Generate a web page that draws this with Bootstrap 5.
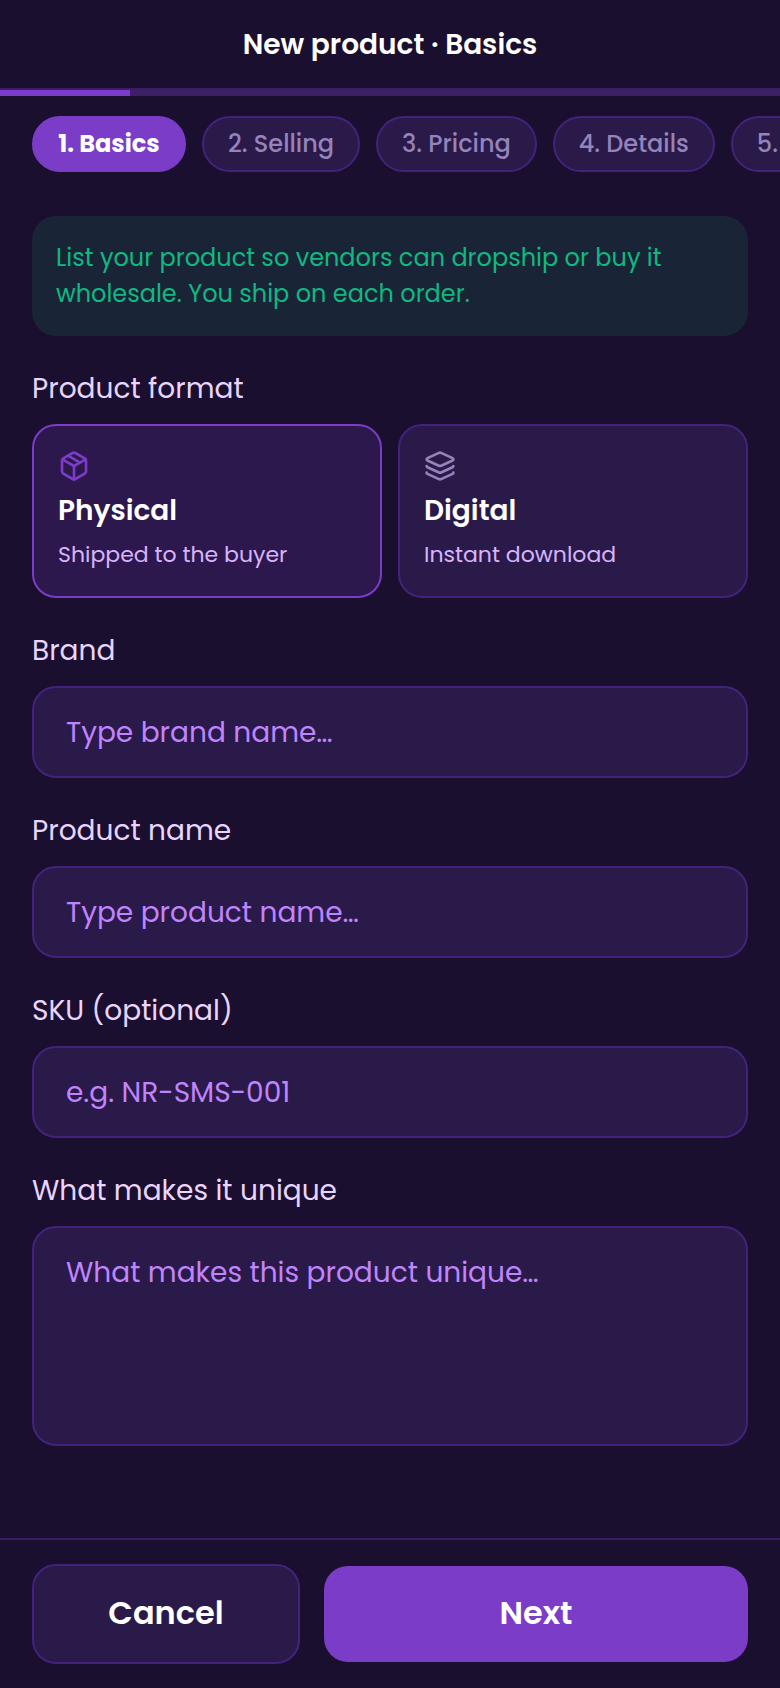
<!DOCTYPE html>
<html lang="en">
<head>
<meta charset="utf-8">
<meta name="viewport" content="width=device-width, initial-scale=1">
<title>New product · Basics</title>
<link href="https://cdn.jsdelivr.net/npm/bootstrap@5.3.0/dist/css/bootstrap.min.css" rel="stylesheet">
<style>
  :root {
    --page: #1a0f2e;
    --surface: #2a1a4a;
    --surface-on: #2c184c;
    --edge: #43227c;
    --line: #3a1c68;
    --track: #3e2064;
    --accent: #7b3cc7;
    --muted: #9484ba;
  }
  body { background: var(--page); color: #fff; font-family: Poppins, Inter, "Open Sans", sans-serif; font-size: 28px; line-height: 42px; }
  .app-header { border-bottom: 2px solid var(--line); padding: 24px 32px 22px; }
  .app-title { font-size: 28px; line-height: 42px; font-weight: 600; }
  .step-progress { height: 6px; background: var(--track); border-radius: 0; }
  .step-progress .progress-bar { background: var(--accent); }
  .steps { gap: 16px; padding: 20px 32px; scrollbar-width: none; }
  .steps::-webkit-scrollbar { display: none; }
  .step { flex: none; min-width: 154px; padding: 8px 24px; border: 2px solid var(--edge); border-radius: 28px; background: var(--surface); color: var(--muted); font-size: 24px; line-height: 36px; font-weight: 500; }
  .step.active { background: var(--accent); border-color: var(--accent); color: #fff; font-weight: 700; }
  .form-area { padding: 24px 32px 92px; gap: 32px; }
  .notice { background: #192437; color: #10b981; border-radius: 24px; padding: 24px; font-size: 24px; line-height: 36px; }
  .field-label { display: block; margin: 0 0 14px; padding: 0; color: #e9d5ff; font-size: 28px; line-height: 42px; float: none; }
  .field-box { border: 2px solid var(--edge); border-radius: 24px; background: var(--surface); padding: 24px 32px 22px; color: #fff; font-size: 28px; line-height: 42px; resize: none; }
  textarea.field-box { padding-bottom: 24px; }
  .field-box:focus { background: var(--surface); border-color: var(--accent); color: #fff; box-shadow: none; }
  .field-box::placeholder { color: #c084fc; opacity: 1; }
  .option-row { gap: 16px; }
  .option { flex: 1 1 0; border: 2px solid var(--edge); border-radius: 24px; background: var(--surface); padding: 24px; cursor: pointer; }
  .option svg { display: block; margin-bottom: 8px; color: var(--muted); }
  .btn-check:checked + .option { border-color: var(--accent); background: var(--surface-on); }
  .btn-check:checked + .option svg { color: var(--accent); }
  .option-name { font-weight: 600; margin-bottom: 6px; }
  .option-note { color: #d8b4fe; font-size: 22px; line-height: 34px; }
  .action-bar { border-top: 2px solid var(--line); background: var(--page); padding: 24px 32px; gap: 24px; }
  .action { border-radius: 24px; padding: 24px 0 26px; color: #fff; font-size: 32px; line-height: 46px; font-weight: 600; }
  .action:hover { color: #fff; }
  .action-cancel { flex: 33 1 0; background: var(--surface); border: 2px solid var(--edge); }
  .action-next { flex: 53 1 0; background: var(--accent); border: 0; }
</style>
</head>
<body class="min-vh-100 d-flex flex-column">
<header class="app-header text-center">
  <h1 class="app-title m-0">New product · Basics</h1>
</header>
<div class="progress step-progress" role="progressbar" aria-label="Step 1 of 6" aria-valuenow="1" aria-valuemin="0" aria-valuemax="6">
  <div class="progress-bar" style="width: calc(100% / 6)"></div>
</div>
<nav class="steps d-flex overflow-auto text-nowrap" aria-label="Steps">
  <button type="button" class="step active" aria-current="step">1. Basics</button>
  <button type="button" class="step">2. Selling</button>
  <button type="button" class="step">3. Pricing</button>
  <button type="button" class="step">4. Details</button>
  <button type="button" class="step">5. Media</button>
</nav>
<form id="product-form" class="form-area d-flex flex-column flex-grow-1">
  <p class="notice m-0">List your product so vendors can dropship or buy it wholesale. You ship on each order.</p>
  <fieldset>
    <legend class="field-label">Product format</legend>
    <div class="option-row d-flex">
      <input class="btn-check" type="radio" name="format" id="physical" checked>
      <label class="option" for="physical">
        <svg width="32" height="32" viewBox="0 0 24 24" fill="none" stroke="currentColor" stroke-width="2" stroke-linecap="round" stroke-linejoin="round" aria-hidden="true"><path d="M11 21.73a2 2 0 0 0 2 0l7-4A2 2 0 0 0 21 16V8a2 2 0 0 0-1-1.73l-7-4a2 2 0 0 0-2 0l-7 4A2 2 0 0 0 3 8v8a2 2 0 0 0 1 1.73z"/><path d="M12 22V12"/><path d="M3.3 7 12 12l8.7-5"/><path d="m7.5 4.27 9 5.15"/></svg>
        <span class="option-name d-block">Physical</span>
        <span class="option-note d-block">Shipped to the buyer</span>
      </label>
      <input class="btn-check" type="radio" name="format" id="digital">
      <label class="option" for="digital">
        <svg width="32" height="32" viewBox="0 0 24 24" fill="none" stroke="currentColor" stroke-width="2" stroke-linecap="round" stroke-linejoin="round" aria-hidden="true"><path d="M12.83 2.18a2 2 0 0 0-1.66 0L2.6 6.08a1 1 0 0 0 0 1.83l8.58 3.91a2 2 0 0 0 1.66 0l8.58-3.9a1 1 0 0 0 0-1.83z"/><path d="M2 12a1 1 0 0 0 .58.91l8.6 3.91a2 2 0 0 0 1.65 0l8.58-3.9A1 1 0 0 0 22 12"/><path d="M2 17a1 1 0 0 0 .58.91l8.6 3.91a2 2 0 0 0 1.65 0l8.58-3.9A1 1 0 0 0 22 17"/></svg>
        <span class="option-name d-block">Digital</span>
        <span class="option-note d-block">Instant download</span>
      </label>
    </div>
  </fieldset>
  <div>
    <label class="field-label" for="brand">Brand</label>
    <input class="form-control field-box" type="text" id="brand" placeholder="Type brand name…">
  </div>
  <div>
    <label class="field-label" for="name">Product name</label>
    <input class="form-control field-box" type="text" id="name" placeholder="Type product name…">
  </div>
  <div>
    <label class="field-label" for="sku">SKU (optional)</label>
    <input class="form-control field-box" type="text" id="sku" placeholder="e.g. NR-SMS-001">
  </div>
  <div>
    <label class="field-label" for="unique">What makes it unique</label>
    <textarea class="form-control field-box d-block" id="unique" rows="4" placeholder="What makes this product unique…"></textarea>
  </div>
</form>
<footer class="action-bar d-flex align-items-center sticky-bottom">
  <button type="button" class="btn action action-cancel">Cancel</button>
  <button type="submit" form="product-form" class="btn action action-next">Next</button>
</footer>
</body>
</html>
